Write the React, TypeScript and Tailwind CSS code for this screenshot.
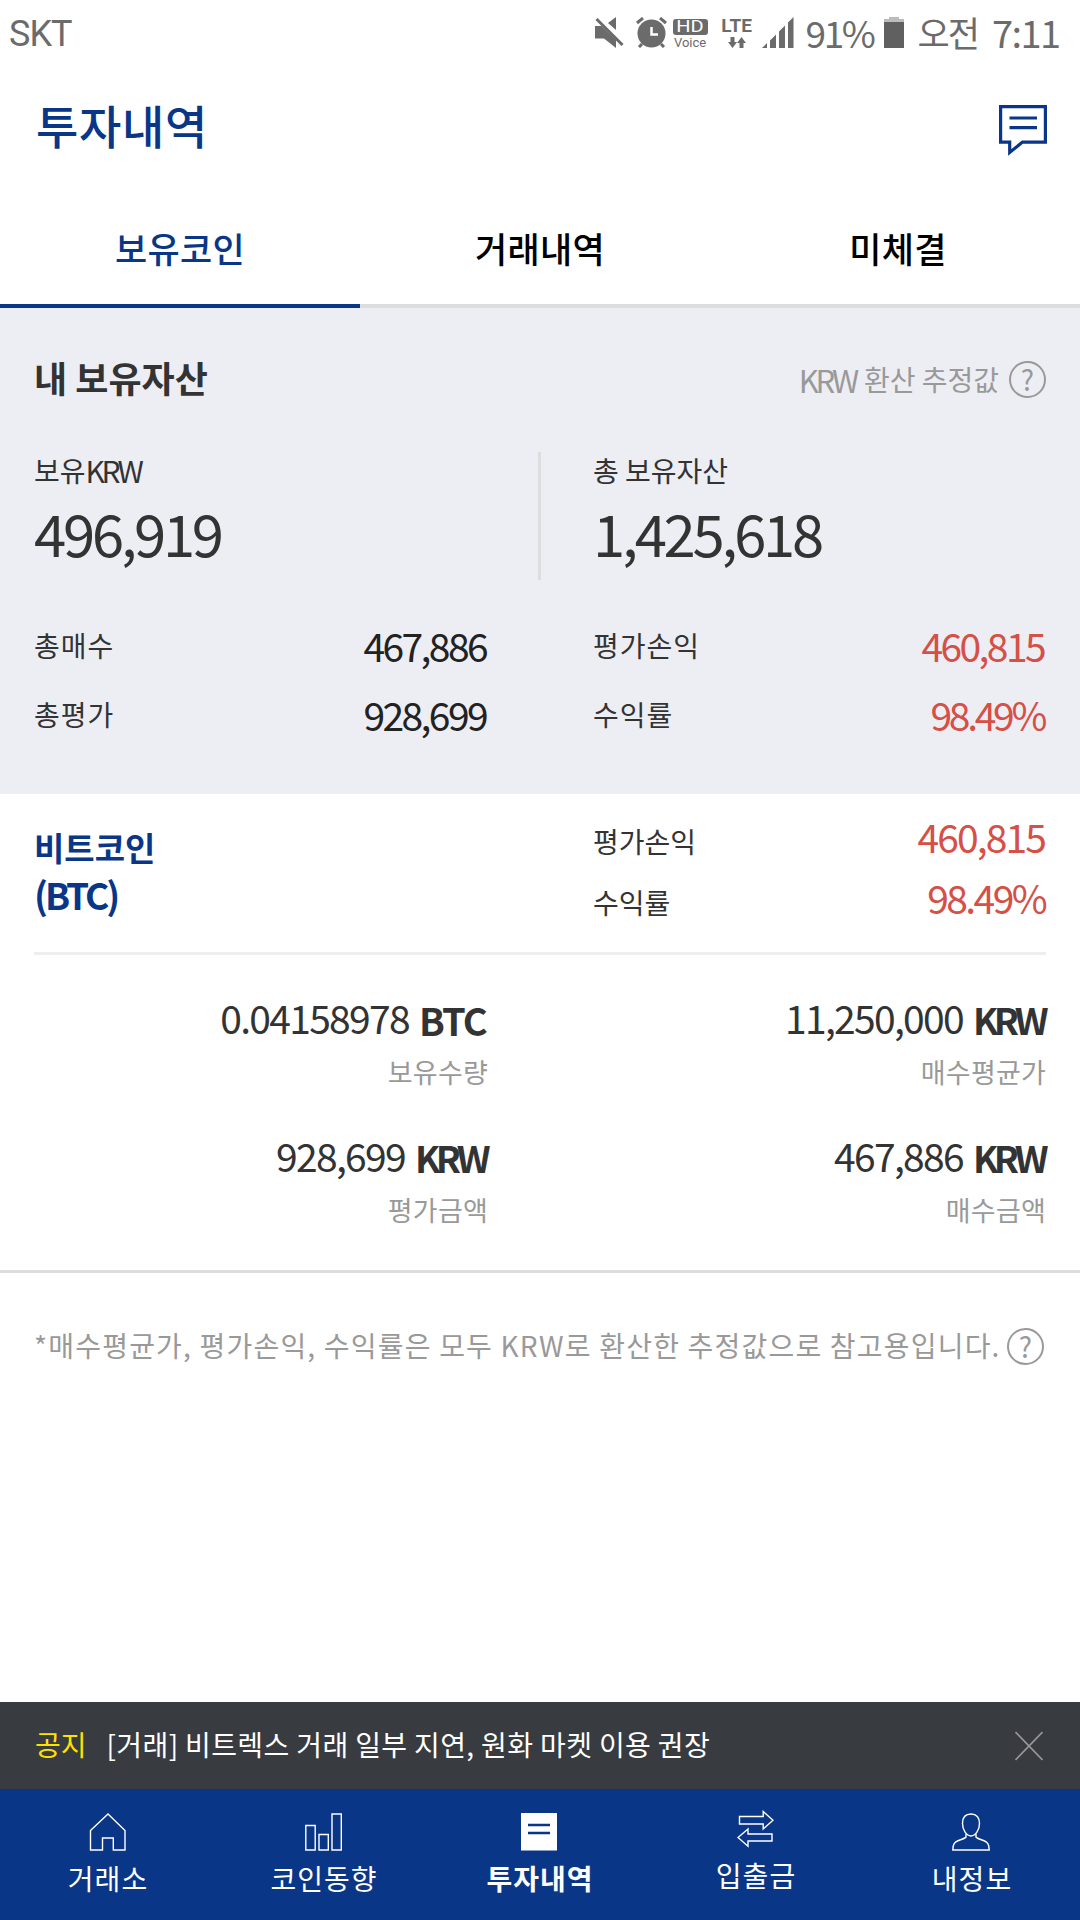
import React from "react";
import clsx from "clsx";

interface StatProps {
	label: string;
	value: string;
	profit?: boolean;
}

interface AmountProps {
	value: string;
	unit: string;
	label: string;
}

interface NavItemProps {
	label: string;
	icon: React.ReactNode;
	selected?: boolean;
	raised?: boolean;
}

const MuteIcon = () => (
	<svg width="29" height="31" viewBox="0 0 29 31" fill="#6b6b6b">
		<path d="M13 6l8-6v13z" />
		<path d="M1.500 5.500l3-3 24 24-3 3z" fill="#fff" />
		<path d="M0 9h6.500L21 23v8L9 21.500H0z" />
		<path d="M1.500 2l26 26" stroke="#6b6b6b" strokeWidth="3" />
	</svg>
);

const AlarmIcon = () => (
	<svg width="31" height="31" viewBox="0 0 31 31" fill="none" stroke="#6b6b6b" strokeWidth="3">
		<circle cx="15.500" cy="16.500" r="14" fill="#6b6b6b" stroke="none" />
		<path d="M1 6l6-5M30 6l-6-5M6 27l-3 3M25 27l3 3" />
		<path d="M15.500 10v7.500h6.500" stroke="#fff" strokeWidth="2.500" />
	</svg>
);

const DataArrowsIcon = () => (
	<svg width="18" height="11" viewBox="0 0 18 11" fill="#6b6b6b">
		<path d="M2.500 0h4v5H9l-4.500 6L0 5h2.500zM11.500 11V6H9l4.500-6L18 6h-2.500v5z" />
	</svg>
);

const SignalIcon = () => (
	<svg width="32" height="31" viewBox="0 0 32 31" fill="#6b6b6b">
		<path d="M0 31l5-5v5zM8 23.500l6-6V31H8zM17 14.500l6-6V31h-6zM26 5.500L31.500 0v31H26z" />
	</svg>
);

const BatteryIcon = () => (
	<svg width="20" height="31" viewBox="0 0 20 31">
		<path d="M5 0h10v2h5v4H0V2h5z" fill="#bcbcbc" />
		<path d="M0 5h20v26H0z" fill="#606060" />
	</svg>
);

const MessageIcon = () => (
	<svg width="48" height="51" viewBox="0 0 48 51" fill="none" stroke="#0a3687" strokeWidth="3.200">
		<path d="M1.600 1.600h44.800v35.500H23.500L10.700 47.500V37.100H1.600z" />
		<path d="M10.500 13H38M10.500 22.700H38" />
	</svg>
);

const HelpIcon = () => (
	<span className="flex h-[37px] w-[37px] shrink-0 items-center justify-center rounded-full border-2 border-[#999] pb-px text-[28px] leading-none tracking-normal text-[#999]">
		?
	</span>
);

const CloseIcon = () => (
	<svg width="28" height="30" viewBox="0 0 28 30" stroke="#999" strokeWidth="1.600">
		<path d="M0.500 1l27 28M27.500 1l-27 28" />
	</svg>
);

const HomeIcon = () => (
	<svg width="37" height="38" viewBox="0 0 37 38" fill="none" stroke="#fff" strokeWidth="1.400">
		<path d="M1.500 17.500L19 1l17 16.500V37H24.300V25H13.500v12h-12z" />
	</svg>
);

const ChartIcon = () => (
	<svg width="37" height="38" viewBox="0 0 37 38" fill="none" stroke="#fff" strokeWidth="1.400">
		<path d="M.8 12.500h9.400V37H.8zM14 21.500h9.300V37H14zM27 1h9.300v36H27z" />
	</svg>
);

const HistoryIcon = () => (
	<svg width="36" height="38" viewBox="0 0 36 38">
		<path d="M0 0h36v37.500H0z" fill="#fff" />
		<path d="M7 12h22M7 20h22" stroke="#0a3687" strokeWidth="2.400" />
	</svg>
);

const TransferIcon = () => (
	<svg width="37" height="38" viewBox="0 0 37 38" fill="none" stroke="#fff" strokeWidth="1.400">
		<path d="M2.500 6.500h23.700V1.500L36 10.300l-9.800 8.700v-5H2.500z" />
		<path d="M35 31H11v5.300L1 27.500 11 19v5h24z" />
	</svg>
);

const PersonIcon = () => (
	<svg width="38" height="38" viewBox="0 0 38 38" fill="none" stroke="#fff" strokeWidth="1.400">
		<path d="M14 21v3c-1 1.500-5 2.500-7.500 3.500C2.500 29 .8 31 .8 37h36.400c0-6-1.700-8-5.700-9.500C29 26.500 25 25.500 24 24v-3" />
		<path d="M19 1c-5.500 0-8.500 3.500-8.500 9.500C10.500 17 14.500 23 19 23s8.500-6 8.500-12.500C27.500 4.500 24.500 1 19 1z" />
	</svg>
);

const StatRow: React.FC<StatProps> = ({ label, value, profit }) => (
	<div className="flex h-[69px] items-center justify-between">
		<span className="pb-0.5 text-[28px] tracking-[1px]">{label}</span>
		<span
			className={clsx(
				"mr-0.5 text-[39px]",
				value.endsWith("%") ? "tracking-[-3.300px]" : "tracking-[-2.600px]",
				profit ? "text-[#d55046]" : "text-[#222]"
			)}
		>
			{value}
		</span>
	</div>
);

const CoinStatRow: React.FC<StatProps> = ({ label, value }) => (
	<div className="flex h-[61px] items-center justify-between">
		<span className="text-[28px]">{label}</span>
		<span
			className={clsx(
				"mr-px pb-[9px] text-[39px] text-[#d55046]",
				value.endsWith("%") ? "tracking-[-2.600px]" : "tracking-[-1.900px]"
			)}
		>
			{value}
		</span>
	</div>
);

const Amount: React.FC<AmountProps> = ({ value, unit, label }) => (
	<div className="flex flex-col items-end">
		<div className="flex h-[50px] items-center">
			<span className="text-[39px] tracking-[-1.700px]">{value}</span>
			<span
				className={clsx(
					"mr-0.5 ml-2.5 pt-[5px] font-bold",
					unit === "BTC" ? "text-[38px] tracking-[-1.700px]" : "text-[37px] tracking-[-4.500px]"
				)}
			>
				{unit}
			</span>
		</div>
		<span className="flex h-[60px] items-center pb-px text-[27px] tracking-[0.2px] text-[#999]">{label}</span>
	</div>
);

const NavItem: React.FC<NavItemProps> = ({ label, icon, selected, raised }) => (
	<li className={clsx("flex flex-1 flex-col items-center", raised ? "pt-[21px]" : "pt-6")}>
		<span className="mr-0.5 h-[42px]">{icon}</span>
		<span
			className={clsx("flex h-[46px] items-center text-[28px] tracking-[1px]", {
				"font-bold": selected,
			})}
		>
			{label}
		</span>
	</li>
);

export default function App() {
	return (
		<div className="flex h-[1920px] w-[1080px] flex-col overflow-hidden whitespace-nowrap bg-white font-['Noto_Sans_CJK_KR',sans-serif] leading-none text-[#333]">
			{/* status bar */}
			<div className="flex h-16 items-center justify-between pl-[9px] pr-[22px] text-[#6b6b6b]">
				<span className="pt-[3px] font-['Roboto',sans-serif] text-[36px] tracking-[-1px]">SKT</span>
				<div className="flex items-center">
					<MuteIcon />
					<span className="ml-3"><AlarmIcon /></span>
					<span className="ml-1.5 flex w-[35px] flex-col items-center pt-1 font-['Roboto',sans-serif]">
						<span className="flex h-4 w-[35px] items-center justify-center rounded-[3px] bg-[#6b6b6b] text-[16px] text-white">
							<span className="scale-x-125">HD</span>
						</span>
						<span className="mt-px text-[13px]">Voice</span>
					</span>
					<span className="ml-3 flex w-[34px] flex-col items-center gap-0.5 font-['Roboto',sans-serif] text-[19px] font-bold">
						LTE
						<DataArrowsIcon />
					</span>
					<span className="ml-2"><SignalIcon /></span>
					<span className="ml-3 w-[70px] text-[37px] tracking-[-2.500px]">91%</span>
					<span className="ml-2"><BatteryIcon /></span>
					<span className="ml-3.5 pb-0.5 text-[35px] tracking-[-2px]">오전</span>
					<span className="ml-3.5 w-[66px] text-[38px] tracking-[-1.600px]">7:11</span>
				</div>
			</div>

			{/* page title */}
			<header className="flex h-32 items-center justify-between pl-9 pr-[33px]">
				<h1 className="pb-2 text-[46px] font-medium tracking-[0.7px] text-[#0a3687]">투자내역</h1>
				<span className="pt-1"><MessageIcon /></span>
			</header>

			<nav className="grid h-[116px] grid-cols-3 text-[35px] font-medium tracking-[0.3px]">
				<a className="flex items-center justify-center border-b-4 border-[#0a3687] pb-0.5 text-[#0a3687]">보유코인</a>
				<a className="flex items-center justify-center border-b-4 border-[#dcdddf] pb-0.5 text-black">거래내역</a>
				<a className="flex items-center justify-center border-b-4 border-[#dcdddf] pr-1 pb-0.5 text-black">미체결</a>
			</nav>

			{/* total assets */}
			<section className="h-[486px] bg-[#edeef4] px-[34px] pt-[35px]">
				<div className="flex h-[70px] items-center justify-between">
					<h2 className="pb-[3px] text-[36px] font-bold">내 보유자산</h2>
					<div className="flex items-center pt-0.5 text-[28px] text-[#999]">
						<span className="text-[31px] tracking-[-3.300px]">KRW</span>
						<span className="ml-2 mr-2.5">환산 추정값</span>
						<HelpIcon />
					</div>
				</div>

				<div className="mt-[39px] flex h-32">
					<div className="w-[507px] border-r-[3px] border-[#dcdddf]">
						<div className="flex h-9 items-center text-[28px]">
							보유<span className="text-[30px] tracking-[-3.300px]">KRW</span>
						</div>
						<div className="flex h-[88px] items-center text-[58px] tracking-[-3.200px]">496,919</div>
					</div>
					<div className="pl-[52px]">
						<div className="flex h-9 items-center text-[28px]">총 보유자산</div>
						<div className="flex h-[88px] items-center text-[58px] tracking-[-3.300px]">1,425,618</div>
					</div>
				</div>

				<div className="mt-[31px] grid grid-cols-[454px_453px] justify-between">
					<StatRow label="총매수" value="467,886" />
					<StatRow label="평가손익" value="460,815" profit />
					<StatRow label="총평가" value="928,699" />
					<StatRow label="수익률" value="98.49%" profit />
				</div>
			</section>

			{/* coin detail */}
			<section className="border-b-[3px] border-[#dcdddf] px-[34px] pb-[30px]">
				<div className="grid h-[161px] grid-cols-[454px_453px] justify-between border-b-[3px] border-[#eee]">
					<div className="pt-[30px] font-bold leading-[47px] text-[#0a3687]">
						<p className="text-[33px]">비트코인</p>
						<p className="text-[37px] tracking-[-3px]">(BTC)</p>
					</div>
					<div className="pt-4">
						<CoinStatRow label="평가손익" value="460,815" />
						<CoinStatRow label="수익률" value="98.49%" />
					</div>
				</div>
				<div className="grid grid-cols-[454px_453px] justify-between gap-y-7 pt-[37px]">
					<Amount value="0.04158978" unit="BTC" label="보유수량" />
					<Amount value="11,250,000" unit="KRW" label="매수평균가" />
					<Amount value="928,699" unit="KRW" label="평가금액" />
					<Amount value="467,886" unit="KRW" label="매수금액" />
				</div>
			</section>

			<div className="mt-[42px] flex h-[62px] items-center justify-between pl-[34px] pr-9 text-[28px] tracking-[1.200px] text-[#999]">
				<span className="pb-[3px]">*매수평균가, 평가손익, 수익률은 모두 KRW로 환산한 추정값으로 참고용입니다.</span>
				<HelpIcon />
			</div>

			{/* notice */}
			<div className="mt-auto flex h-[87px] items-center bg-[#383b40] pl-[35px] pr-[37px] text-[28px] text-white">
				<span className="pb-[3px] text-[#ffe100]">공지</span>
				<span className="ml-5 flex-1 pb-[3px] tracking-[0.37px]">[거래] 비트렉스 거래 일부 지연, 원화 마켓 이용 권장</span>
				<CloseIcon />
			</div>

			<ul className="flex h-[131px] bg-[#0a3687] text-white">
				<NavItem label="거래소" icon={<HomeIcon />} />
				<NavItem label="코인동향" icon={<ChartIcon />} />
				<NavItem label="투자내역" icon={<HistoryIcon />} selected />
				<NavItem label="입출금" icon={<TransferIcon />} raised />
				<NavItem label="내정보" icon={<PersonIcon />} />
			</ul>
		</div>
	);
}
